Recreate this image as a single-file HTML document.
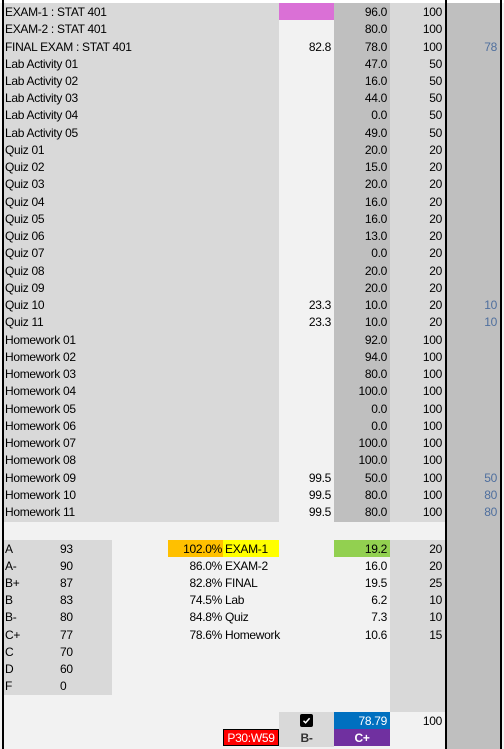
<!DOCTYPE html>
<html><head><style>
*{margin:0;padding:0;box-sizing:border-box}
body{width:504px;height:749px;background:#f2f2f2;font-family:"Liberation Sans",sans-serif;font-size:12px;letter-spacing:-0.3px;color:#000;position:relative;overflow:hidden}
.top{position:absolute;left:0;top:0;width:504px;height:3px;background:#fff}
.lb{position:absolute;left:2px;top:0;width:2px;height:749px;background:#000}
.vb{position:absolute;left:445px;top:0;width:1.5px;height:749px;background:#000}
.rb{position:absolute;left:500px;top:0;width:2px;height:749px;background:#000}
.band{position:absolute}
.r{position:absolute;left:4px;height:18px;line-height:19px;width:496px}
.r div{position:absolute;top:0;height:17.3px;white-space:nowrap}
.a{left:0;width:275px;padding-left:1px}
.b{left:275px;width:55px;text-align:right;padding-right:3px}
.c{left:330px;width:56px;text-align:right;padding-right:3px}
.d{left:386px;width:55px;text-align:right;padding-right:3px}
.e{left:442px;width:54px;text-align:right;padding-right:3px;color:#4f6f9e}
.g1{left:0;width:108px;padding-left:1px}
.g2{left:56px}
.p{left:164px;width:55px;text-align:right;padding-right:1px}
.l{left:219px;width:56px;padding-left:2px}
</style></head><body>
<div class="top"></div>
<div class="band" style="left:446px;top:3px;width:54px;height:746px;background:#bfbfbf"></div>
<div class="band" style="left:4px;top:3px;width:275px;height:519px;background:#d9d9d9"></div>
<div class="band" style="left:334px;top:3px;width:56px;height:519px;background:#bfbfbf"></div>
<div class="band" style="left:390px;top:3px;width:55px;height:519px;background:#d9d9d9"></div>
<div class="band" style="left:279px;top:3px;width:55px;height:17px;background:#da70d6"></div>
<div class="band" style="left:4px;top:539.5px;width:108px;height:155.5px;background:#d9d9d9"></div>
<div class="band" style="left:390px;top:539.5px;width:55px;height:172.5px;background:#d9d9d9"></div>

<div class="r" style="top:3.0px"><div class="a">EXAM-1 : STAT 401</div><div class="c">96.0</div><div class="d">100</div></div>
<div class="r" style="top:20.2px"><div class="a">EXAM-2 : STAT 401</div><div class="c">80.0</div><div class="d">100</div></div>
<div class="r" style="top:37.5px"><div class="a">FINAL EXAM : STAT 401</div><div class="b">82.8</div><div class="c">78.0</div><div class="d">100</div><div class="e">78</div></div>
<div class="r" style="top:54.7px"><div class="a">Lab Activity 01</div><div class="c">47.0</div><div class="d">50</div></div>
<div class="r" style="top:72.0px"><div class="a">Lab Activity 02</div><div class="c">16.0</div><div class="d">50</div></div>
<div class="r" style="top:89.2px"><div class="a">Lab Activity 03</div><div class="c">44.0</div><div class="d">50</div></div>
<div class="r" style="top:106.4px"><div class="a">Lab Activity 04</div><div class="c">0.0</div><div class="d">50</div></div>
<div class="r" style="top:123.7px"><div class="a">Lab Activity 05</div><div class="c">49.0</div><div class="d">50</div></div>
<div class="r" style="top:140.9px"><div class="a">Quiz 01</div><div class="c">20.0</div><div class="d">20</div></div>
<div class="r" style="top:158.2px"><div class="a">Quiz 02</div><div class="c">15.0</div><div class="d">20</div></div>
<div class="r" style="top:175.4px"><div class="a">Quiz 03</div><div class="c">20.0</div><div class="d">20</div></div>
<div class="r" style="top:192.6px"><div class="a">Quiz 04</div><div class="c">16.0</div><div class="d">20</div></div>
<div class="r" style="top:209.9px"><div class="a">Quiz 05</div><div class="c">16.0</div><div class="d">20</div></div>
<div class="r" style="top:227.1px"><div class="a">Quiz 06</div><div class="c">13.0</div><div class="d">20</div></div>
<div class="r" style="top:244.4px"><div class="a">Quiz 07</div><div class="c">0.0</div><div class="d">20</div></div>
<div class="r" style="top:261.6px"><div class="a">Quiz 08</div><div class="c">20.0</div><div class="d">20</div></div>
<div class="r" style="top:278.8px"><div class="a">Quiz 09</div><div class="c">20.0</div><div class="d">20</div></div>
<div class="r" style="top:296.1px"><div class="a">Quiz 10</div><div class="b">23.3</div><div class="c">10.0</div><div class="d">20</div><div class="e">10</div></div>
<div class="r" style="top:313.3px"><div class="a">Quiz 11</div><div class="b">23.3</div><div class="c">10.0</div><div class="d">20</div><div class="e">10</div></div>
<div class="r" style="top:330.6px"><div class="a">Homework 01</div><div class="c">92.0</div><div class="d">100</div></div>
<div class="r" style="top:347.8px"><div class="a">Homework 02</div><div class="c">94.0</div><div class="d">100</div></div>
<div class="r" style="top:365.0px"><div class="a">Homework 03</div><div class="c">80.0</div><div class="d">100</div></div>
<div class="r" style="top:382.3px"><div class="a">Homework 04</div><div class="c">100.0</div><div class="d">100</div></div>
<div class="r" style="top:399.5px"><div class="a">Homework 05</div><div class="c">0.0</div><div class="d">100</div></div>
<div class="r" style="top:416.8px"><div class="a">Homework 06</div><div class="c">0.0</div><div class="d">100</div></div>
<div class="r" style="top:434.0px"><div class="a">Homework 07</div><div class="c">100.0</div><div class="d">100</div></div>
<div class="r" style="top:451.2px"><div class="a">Homework 08</div><div class="c">100.0</div><div class="d">100</div></div>
<div class="r" style="top:468.5px"><div class="a">Homework 09</div><div class="b">99.5</div><div class="c">50.0</div><div class="d">100</div><div class="e">50</div></div>
<div class="r" style="top:485.7px"><div class="a">Homework 10</div><div class="b">99.5</div><div class="c">80.0</div><div class="d">100</div><div class="e">80</div></div>
<div class="r" style="top:503.0px"><div class="a">Homework 11</div><div class="b">99.5</div><div class="c">80.0</div><div class="d">100</div><div class="e">80</div></div>

<div class="r" style="top:539.5px"><div class="g1">A</div><div class="g2">93</div><div class="p" style="background:#ffc000">102.0%</div><div class="l" style="background:#ffff00">EXAM-1</div><div class="c" style="background:#92d050">19.2</div><div class="d">20</div></div>
<div class="r" style="top:556.7px"><div class="g1">A-</div><div class="g2">90</div><div class="p">86.0%</div><div class="l">EXAM-2</div><div class="c">16.0</div><div class="d">20</div></div>
<div class="r" style="top:574.0px"><div class="g1">B+</div><div class="g2">87</div><div class="p">82.8%</div><div class="l">FINAL</div><div class="c">19.5</div><div class="d">25</div></div>
<div class="r" style="top:591.2px"><div class="g1">B</div><div class="g2">83</div><div class="p">74.5%</div><div class="l">Lab</div><div class="c">6.2</div><div class="d">10</div></div>
<div class="r" style="top:608.4px"><div class="g1">B-</div><div class="g2">80</div><div class="p">84.8%</div><div class="l">Quiz</div><div class="c">7.3</div><div class="d">10</div></div>
<div class="r" style="top:625.7px"><div class="g1">C+</div><div class="g2">77</div><div class="p">78.6%</div><div class="l">Homework</div><div class="c">10.6</div><div class="d">15</div></div>
<div class="r" style="top:642.9px"><div class="g1">C</div><div class="g2">70</div></div>
<div class="r" style="top:660.2px"><div class="g1">D</div><div class="g2">60</div></div>
<div class="r" style="top:677.4px"><div class="g1">F</div><div class="g2">0</div></div>

<div class="band" style="left:279px;top:712px;width:55px;height:34.5px;background:#d9d9d9"></div>
<div class="r" style="top:712.0px"><div class="b" style="text-align:center;padding:0"><span style="display:inline-block;width:13px;height:13px;background:#000;border-radius:2px;margin-top:2px;vertical-align:top;position:relative"><svg width="13" height="13" style="position:absolute;left:0;top:0"><path d="M3.5 6.8 L5.6 8.8 L9.6 4.2" stroke="#fff" stroke-width="1.5" fill="none"/></svg></span></div><div class="c" style="background:#0070c0;color:#fff">78.79</div><div class="d">100</div></div>
<div class="r" style="top:729.2px"><div style="left:219px;width:56px;background:#ff0000;color:#fff;border:1px solid #000;text-align:center;line-height:16px">P30:W59</div><div class="b" style="text-align:center;padding:0;font-weight:bold;color:#333">B-</div><div class="c" style="background:#7030a0;color:#fff;text-align:center;padding:0;font-weight:bold">C+</div></div>

<div class="lb"></div><div class="vb"></div><div class="rb"></div>
</body></html>
